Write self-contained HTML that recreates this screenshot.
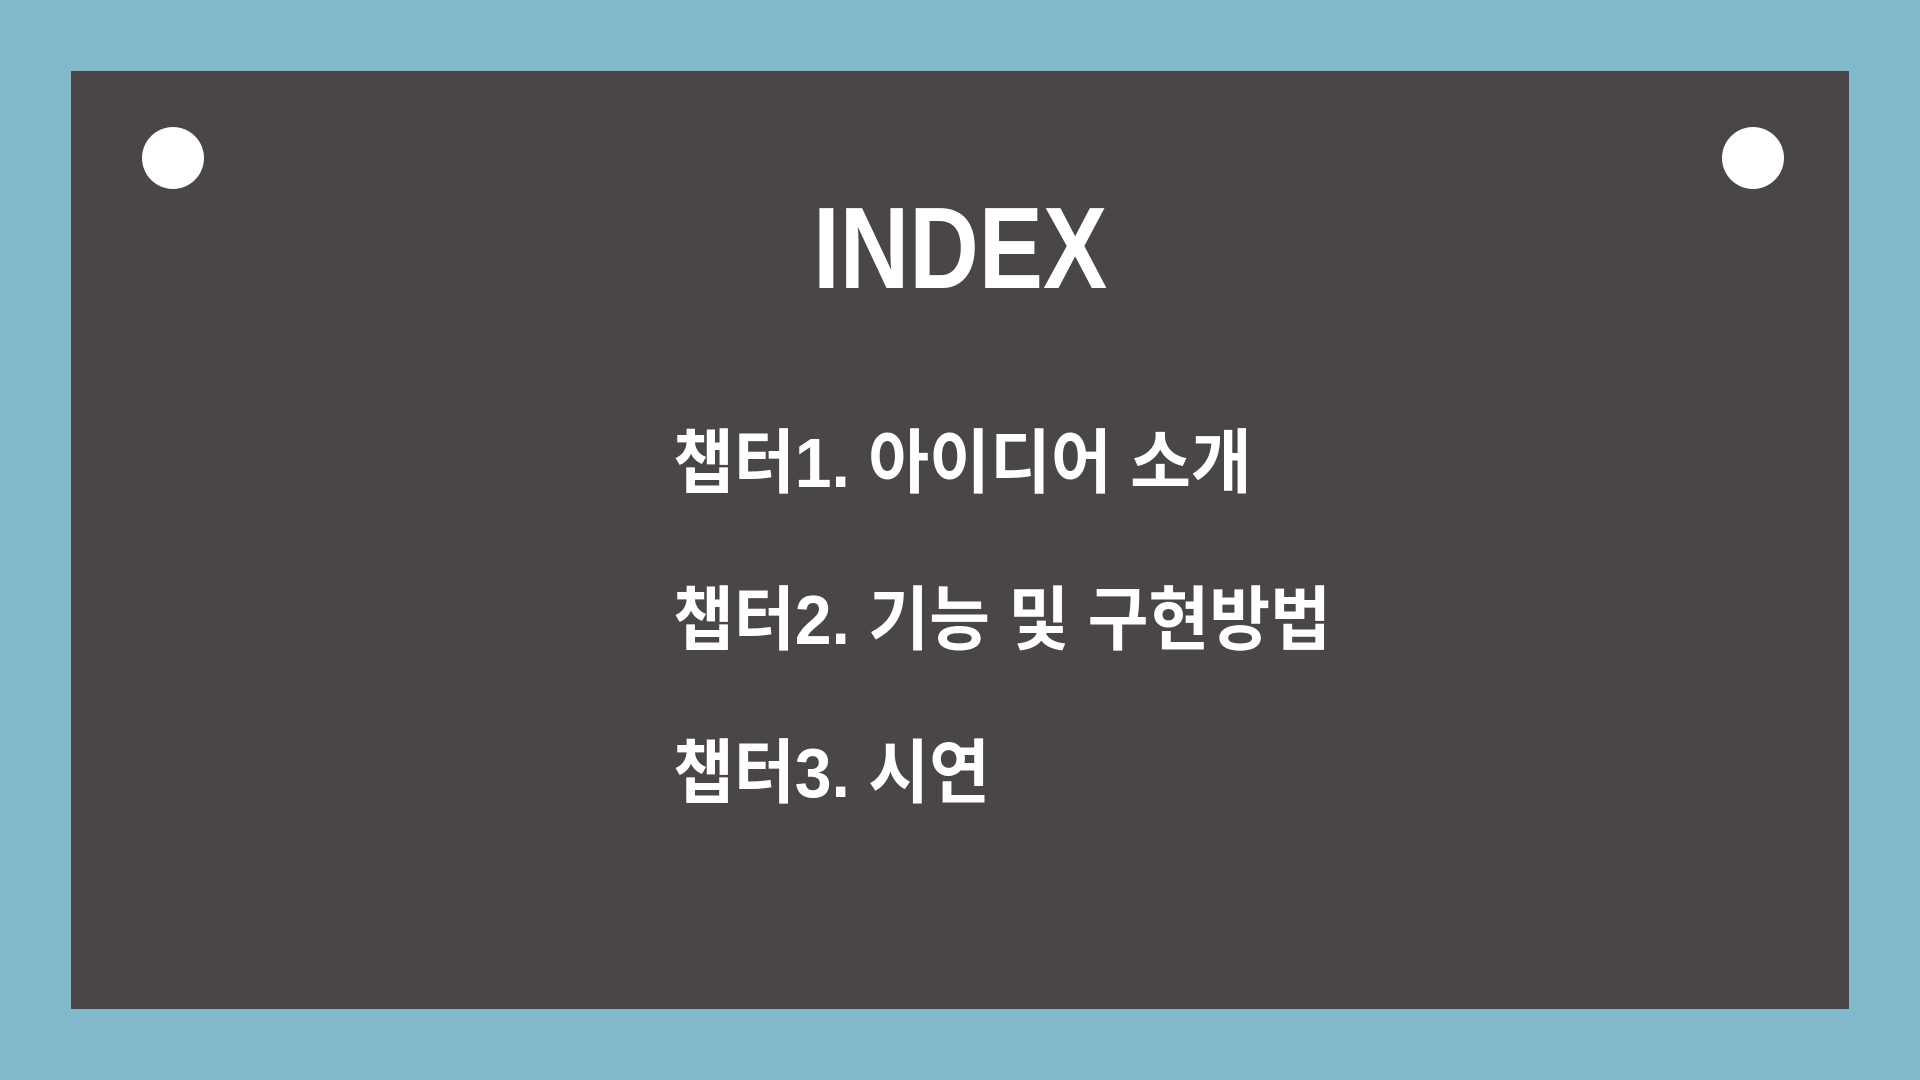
<!DOCTYPE html>
<html><head><meta charset="utf-8"><style>
html,body{margin:0;padding:0;width:1920px;height:1080px;background:#82b8cc;overflow:hidden}
.panel{position:absolute;left:71px;top:71px;width:1778px;height:938px;background:#4a4548}
.dot{position:absolute;width:62px;height:62px;border-radius:50%;background:#fff;top:127px}
.t{position:absolute;color:#fff;font-family:"Liberation Sans","Noto Sans CJK KR",sans-serif;font-weight:bold;white-space:nowrap;transform-origin:0 0}
.title{left:813px;top:190px;font-size:116px;line-height:116px;transform:scaleX(0.83)}
.l{font-family:"Liberation Sans","Noto Sans CJK KR",sans-serif;font-size:70px;line-height:70px;left:673px;transform:scaleX(0.945)}
</style></head><body>
<div class="panel"></div>
<div class="dot" style="left:142px"></div>
<div class="dot" style="left:1722px"></div>
<div class="t title">INDEX</div>
<div class="t l" style="top:428px">챕터1. 아이디어 소개</div>
<div class="t l" style="top:585px">챕터2. 기능 및 구현방법</div>
<div class="t l" style="top:738px">챕터3. 시연</div>
</body></html>
